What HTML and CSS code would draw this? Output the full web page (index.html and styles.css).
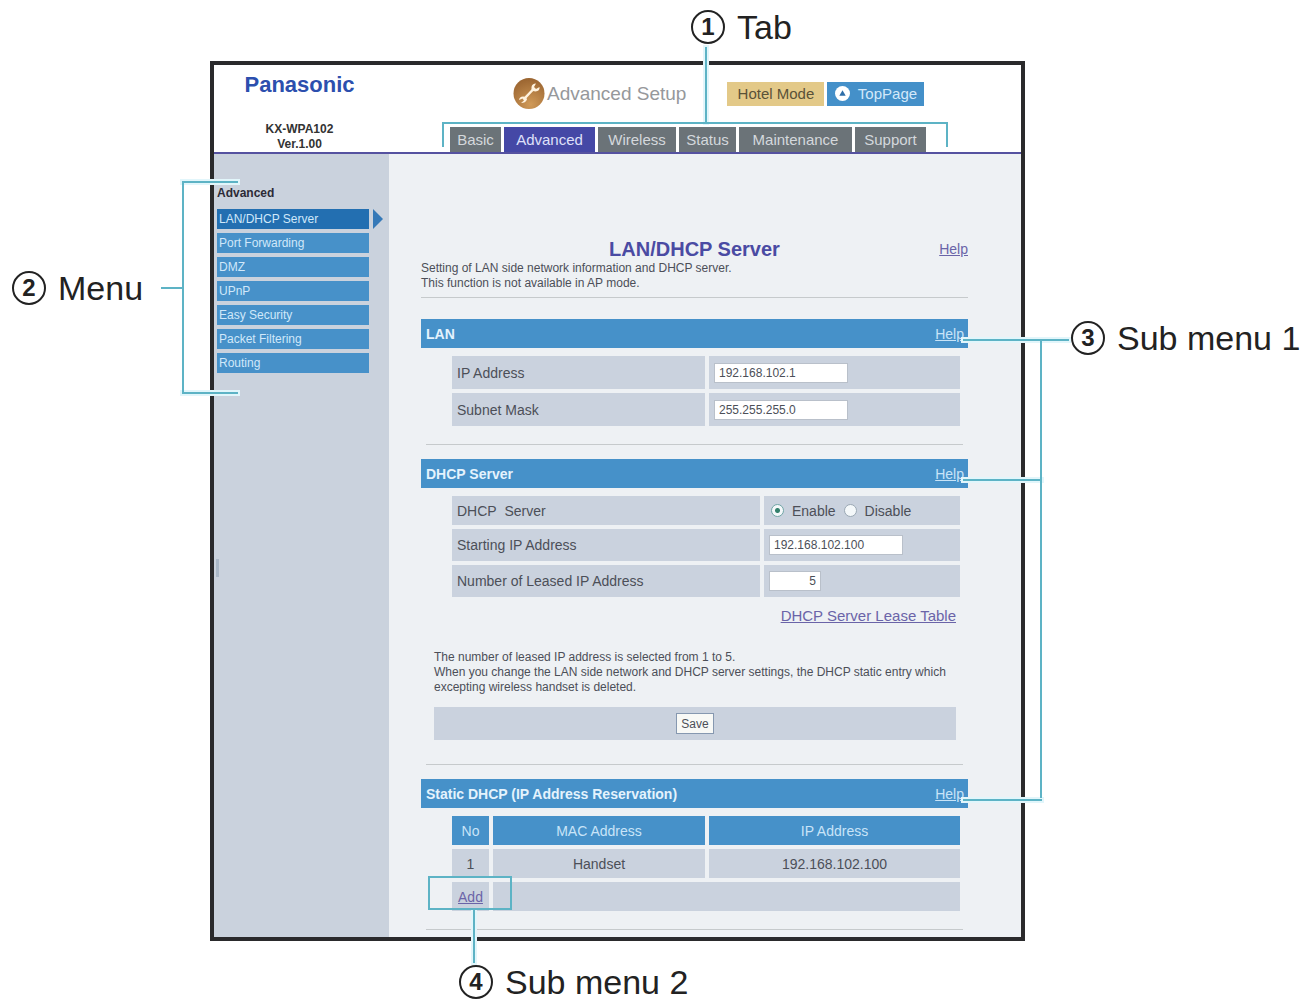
FILE: index.html
```
<!DOCTYPE html>

<html lang="en">
<head>
	<meta charset="utf-8">
	<meta name="viewport" content="width=device-width, initial-scale=1.0">
	<title>KX-WPA102 - LAN/DHCP Server</title>
	<link rel="stylesheet" href="styles.css">
</head>
<body>
<div class="figure">

	<p class="label label-tab"><span class="num">1</span>Tab</p>
	<p class="label label-menu"><span class="num">2</span>Menu</p>

	<div class="screen">
		<header class="header">
			<div class="brand">
				<div class="logo">Panasonic</div>
				<div class="version">KX-WPA102<br>Ver.1.00</div>
			</div>
			<div class="top">
				<div class="title-row">
					<svg class="wrench" viewBox="0 0 32 32" aria-hidden="true">
						<defs>
							<radialGradient id="ball" cx="55%" cy="85%" r="85%">
								<stop offset="0" stop-color="#d09a58"/>
								<stop offset="1" stop-color="#9a6430"/>
							</radialGradient>
						</defs>
						<circle cx="16" cy="16" r="15.5" fill="url(#ball)"/>
						<path d="M12 20.500L20.500 11.500" stroke="#fff3df" stroke-width="2.500"/>
						<path d="M23 6L21 9.500L23 11.500L26.500 9.500Q27 13.500 22.500 14L20 13.500L18.500 12L18.500 9.500Q19 6 23 6Z" fill="#fff3df"/>
						<path d="M8 25.500L11 23L9.500 21L6 22.500Q6.500 19 10 19L13 19.500L14 22Q12.500 25.500 8 25.500Z" fill="#fff3df"/>
					</svg>
					<span class="title">Advanced Setup</span>
					<button class="btn hotel" type="button">Hotel Mode</button>
					<button class="btn toppage" type="button">
						<svg class="up" viewBox="0 0 14 14" aria-hidden="true"><circle cx="7" cy="7" r="7" fill="#fff"/><path d="M7 4L10 9H4Z" fill="#2e6ea8"/></svg>
						TopPage
					</button>
				</div>
				<nav class="tabs">
					<a href="#">Basic</a>
					<a href="#" class="active">Advanced</a>
					<a href="#">Wireless</a>
					<a href="#">Status</a>
					<a href="#">Maintenance</a>
					<a href="#">Support</a>
					<span class="tab-bracket"></span>
					<span class="line tab-stem"></span>
				</nav>
			</div>
		</header>

		<div class="body">
			<aside class="sidebar">
				<h2>Advanced</h2>
				<ul>
					<li><a href="#" class="active">LAN/DHCP Server</a></li>
					<li><a href="#">Port Forwarding</a></li>
					<li><a href="#">DMZ</a></li>
					<li><a href="#">UPnP</a></li>
					<li><a href="#">Easy Security</a></li>
					<li><a href="#">Packet Filtering</a></li>
					<li><a href="#">Routing</a></li>
				</ul>
				<span class="splitter"></span>
				<span class="line menu-top"></span>
				<span class="line menu-bottom"></span>
				<span class="line menu-side"></span>
				<span class="line menu-stem"></span>
			</aside>

			<main class="main">
				<div class="page-head">
					<h1>LAN/DHCP Server</h1>
					<a href="#">Help</a>
				</div>
				<p class="desc">Setting of LAN side network information and DHCP server.<br>This function is not available in AP mode.</p>
				<hr class="full">

				<div class="bar">
					<h2>LAN</h2>
					<a href="#">Help</a>
					<span class="line help-line first"></span>
				</div>
				<table class="lan">
					<tr>
						<td><label for="ip">IP Address</label></td>
						<td class="half"><input type="text" id="ip" value="192.168.102.1"></td>
					</tr>
					<tr>
						<td><label for="mask">Subnet Mask</label></td>
						<td><input type="text" id="mask" value="255.255.255.0"></td>
					</tr>
				</table>
				<hr>

				<div class="bar">
					<h2>DHCP Server</h2>
					<a href="#">Help</a>
					<span class="line help-line"></span>
				</div>
				<table class="dhcp">
					<tr>
						<td>DHCP&nbsp; Server</td>
						<td class="value">
							<div class="radios">
								<input type="radio" name="dhcp" id="enable" checked><label for="enable">Enable</label>
								<input type="radio" name="dhcp" id="disable"><label for="disable">Disable</label>
							</div>
						</td>
					</tr>
					<tr>
						<td><label for="start">Starting IP Address</label></td>
						<td><input type="text" id="start" value="192.168.102.100"></td>
					</tr>
					<tr>
						<td><label for="leased">Number of Leased IP Address</label></td>
						<td><input type="text" id="leased" class="short" value="5"></td>
					</tr>
				</table>
				<p class="lease"><a href="#">DHCP Server Lease Table</a></p>
				<p class="note">The number of leased IP address is selected from 1 to 5.<br>When you change the LAN side network and DHCP server settings, the DHCP static entry which<br>excepting wireless handset is deleted.</p>
				<div class="save"><button type="button">Save</button></div>
				<hr class="after-save">

				<div class="bar">
					<h2>Static DHCP (IP Address Reservation)</h2>
					<a href="#">Help</a>
					<span class="line help-line"></span>
				</div>
				<table class="static">
					<tr>
						<th class="no">No</th>
						<th>MAC Address</th>
						<th class="half">IP Address</th>
					</tr>
					<tr>
						<td>1</td>
						<td>Handset</td>
						<td>192.168.102.100</td>
					</tr>
					<tr>
						<td class="add"><a href="#">Add</a><span class="line add-stem"></span><span class="add-box"></span></td>
						<td colspan="2"></td>
					</tr>
				</table>
				<hr>
				<span class="line help-side"></span>
			</main>
		</div>
	</div>

	<p class="label label-sub1"><span class="num">3</span>Sub menu 1</p>
	<p class="label label-sub2"><span class="num">4</span>Sub menu 2</p>

</div>
</body>
</html>
```

FILE: styles.css
```
* {
	box-sizing: border-box;
}

body {
	margin: 0;
	background-color: #fff;
	color: #4c4f58;
	font-family: "Liberation Sans", Arial, sans-serif;
	font-size: 14px;
}

h1, h2, p, ul {
	margin: 0;
	padding: 0;
}

a {
	color: #6a64a8;
}

.figure {
	display: grid;
	grid-template-columns: 210px 1fr 282px;
	grid-template-rows: 61px auto auto;
	align-items: start;
}

/* Numbered labels round the screen */
.label {
	display: flex;
	align-items: center;
	gap: 12px;
	height: 34px;
	color: #222;
	font-size: 34px;
	white-space: nowrap;
}

.num {
	display: flex;
	align-items: center;
	justify-content: center;
	width: 34px;
	height: 34px;
	border: 2px solid #222;
	border-radius: 50%;
	font-size: 24px;
	font-weight: bold;
}

.label-tab {
	grid-area: 1 / 2;
	margin: 10px 0 0 481px;
}

.label-menu {
	grid-area: 2 / 1;
	margin: 210px 0 0 12px;
}

.label-sub1 {
	grid-area: 2 / 3;
	margin: 260px 0 0 46px;
}

.label-sub2 {
	grid-area: 3 / 2;
	margin: 24px 0 0 249px;
}

/* Leader lines */
.line {
	position: absolute;
	z-index: 1;
	background-color: #5db3c5;
	box-shadow: 0 0 0 2px #e2f6fb;
}

.tab-bracket {
	position: absolute;
	z-index: 2;
	top: -5px;
	left: -8px;
	right: -22px;
	height: 25px;
	border: 2px solid #5db3c5;
	border-bottom: none;
}

.tab-stem {
	top: -80px;
	left: 255px;
	width: 2px;
	height: 76px;
}

.menu-top, .menu-bottom {
	left: -32px;
	width: 56px;
	height: 2px;
}

.menu-top {
	top: 27px;
}

.menu-bottom {
	top: 238px;
}

.menu-side {
	z-index: 2;
	top: 27px;
	left: -32px;
	width: 2px;
	height: 213px;
	box-shadow: none;
}

.menu-stem {
	top: 133px;
	left: -53px;
	width: 22px;
	height: 2px;
	box-shadow: none;
}

.help-line {
	top: 20px;
	left: calc(100% - 5px);
	width: 79px;
	height: 2px;
}

.help-line.first {
	width: 106px;
}

.help-side {
	z-index: 2;
	top: 185px;
	right: -21px;
	bottom: 139px;
	width: 2px;
	box-shadow: none;
}

.add-box {
	position: absolute;
	z-index: 2;
	top: -6px;
	left: -24px;
	width: 84px;
	height: 34px;
	border: 2px solid #5db3c5;
}

.add-stem {
	top: 28px;
	left: 21px;
	width: 2px;
	height: 53px;
}

/* Screen */
.screen {
	grid-area: 2 / 2;
	border: 4px solid #2a2a2c;
	background-color: #eef1f4;
}

.header {
	display: flex;
	height: 89px;
	background-color: #fff;
	border-bottom: 2px solid #5552a0;
}

.brand {
	display: flex;
	flex-direction: column;
	justify-content: space-between;
	width: 175px;
	padding: 8px 4px 0 0;
	text-align: center;
}

.logo {
	color: #2c4fae;
	font-size: 22px;
	font-weight: bold;
	line-height: 24px;
}

.version {
	color: #333;
	font-size: 12px;
	font-weight: bold;
	line-height: 15px;
}

.top {
	flex: 1;
	display: flex;
	flex-direction: column;
	justify-content: space-between;
	padding-top: 12px;
}

.title-row {
	display: flex;
	align-items: center;
	margin-left: 124px;
}

.wrench {
	width: 32px;
	height: 33px;
	margin-right: 2px;
}

.title {
	margin-right: 41px;
	color: #96989b;
	font-size: 19px;
}

.btn {
	display: flex;
	align-items: center;
	justify-content: center;
	gap: 8px;
	width: 97px;
	height: 24px;
	margin-right: 3px;
	padding: 0;
	border: none;
	font-family: inherit;
	font-size: 15px;
}

.hotel {
	background-color: #e3c988;
	color: #5a5238;
}

.toppage {
	background-color: #4490c9;
	color: #d3e9fa;
}

.up {
	width: 15px;
	height: 15px;
}

.tabs {
	position: relative;
	display: grid;
	grid-template-columns: 51fr 91fr 78fr 57fr 113fr 71fr;
	gap: 3px;
	margin: 0 95px 0 61px;
}

.tabs a {
	background-color: #6b7378;
	color: #d4d8dc;
	font-size: 15px;
	line-height: 25px;
	text-align: center;
	text-decoration: none;
}

.tabs .active {
	background-color: #4548a6;
	color: #dfe0fa;
}

.body {
	display: flex;
}

/* Left menu */
.sidebar {
	position: relative;
	width: 175px;
	padding: 31px 20px 0 3px;
	background-color: #cad2dd;
}

.sidebar h2 {
	color: #2c2a36;
	font-size: 12px;
	line-height: 16px;
}

.sidebar ul {
	display: grid;
	gap: 4px;
	margin-top: 8px;
	list-style: none;
}

.sidebar a {
	display: block;
	padding-left: 2px;
	background-color: #4791c9;
	color: #d0e8fa;
	font-size: 12px;
	line-height: 20px;
	text-decoration: none;
}

.sidebar .active {
	position: relative;
	background-color: #236fb1;
}

.sidebar .active::after {
	content: "";
	position: absolute;
	top: 0;
	right: -14px;
	border: 10px solid transparent;
	border-left-color: #3579b8;
	border-right: none;
}

.splitter {
	position: absolute;
	top: 405px;
	left: 2px;
	width: 3px;
	height: 18px;
	background-color: #aab8c8;
}

/* Settings */
.main {
	position: relative;
	flex: 1;
	padding: 83px 53px 7px 32px;
}

.page-head {
	display: grid;
	grid-template-columns: 1fr auto 1fr;
	align-items: center;
}

.page-head h1 {
	grid-column: 2;
	color: #4a4ba3;
	font-size: 20px;
	line-height: 24px;
}

.page-head a {
	justify-self: end;
}

.desc, .note {
	font-size: 12px;
	line-height: 15px;
}

hr {
	height: 1px;
	margin: 14px 5px;
	border: none;
	background-color: #c6cacc;
}

hr.full {
	margin: 6px 0 21px;
}

hr.after-save {
	margin-top: 24px;
}

hr:last-of-type {
	margin-bottom: 0;
}

.bar {
	position: relative;
	display: flex;
	align-items: center;
	justify-content: space-between;
	height: 29px;
	padding: 0 4px 0 5px;
	background-color: #4691c9;
	color: #e4f3fd;
}

.bar h2 {
	font-size: 14px;
}

.bar a {
	color: #c9e4f8;
}

table {
	width: calc(100% - 31px);
	margin: 4px 4px 0 27px;
	border-spacing: 4px;
	table-layout: fixed;
}

td, th {
	height: 32px;
	padding: 0 5px;
	background-color: #cad2de;
	font-weight: normal;
}

.lan td {
	height: 33px;
}

.half {
	width: 251px;
}

.value {
	width: 196px;
}

input[type="text"] {
	display: block;
	width: 134px;
	height: 20px;
	padding: 0 4px;
	border: 1px solid #b9c0ca;
	background-color: #fff;
	color: #4c4f58;
	font-family: inherit;
	font-size: 12px;
}

input.short {
	width: 52px;
	text-align: right;
}

.radios {
	display: flex;
	align-items: center;
	padding-left: 2px;
}

.radios input {
	appearance: none;
	width: 13px;
	height: 13px;
	margin: 0 8px 0 0;
	border: 1px solid #9aa8b4;
	border-radius: 50%;
	background-color: #f4f8fa;
}

.radios input:checked {
	border-color: #6fa5a5;
	background-image: radial-gradient(circle, #33806c 2px, transparent 3px);
}

.radios label {
	margin-right: 8px;
}

.dhcp tr:first-child td {
	height: 29px;
}

.lease {
	margin: 5px 12px 0 0;
	font-size: 15px;
	line-height: 20px;
	text-align: right;
}

.note {
	margin: 24px 0 0 13px;
}

.save {
	display: flex;
	align-items: center;
	justify-content: center;
	height: 33px;
	margin: 12px 12px 0 13px;
	background-color: #cad2de;
}

.save button {
	width: 38px;
	height: 21px;
	padding: 0;
	border: 1px solid #8698b0;
	background-color: #f8f9f6;
	color: #4c4f58;
	font-family: inherit;
	font-size: 12px;
}

.static td, .static th {
	height: 29px;
	text-align: center;
}

.static th {
	background-color: #4691c9;
	color: #c9e4f8;
}

.no {
	width: 37px;
}

.add {
	position: relative;
}
```
